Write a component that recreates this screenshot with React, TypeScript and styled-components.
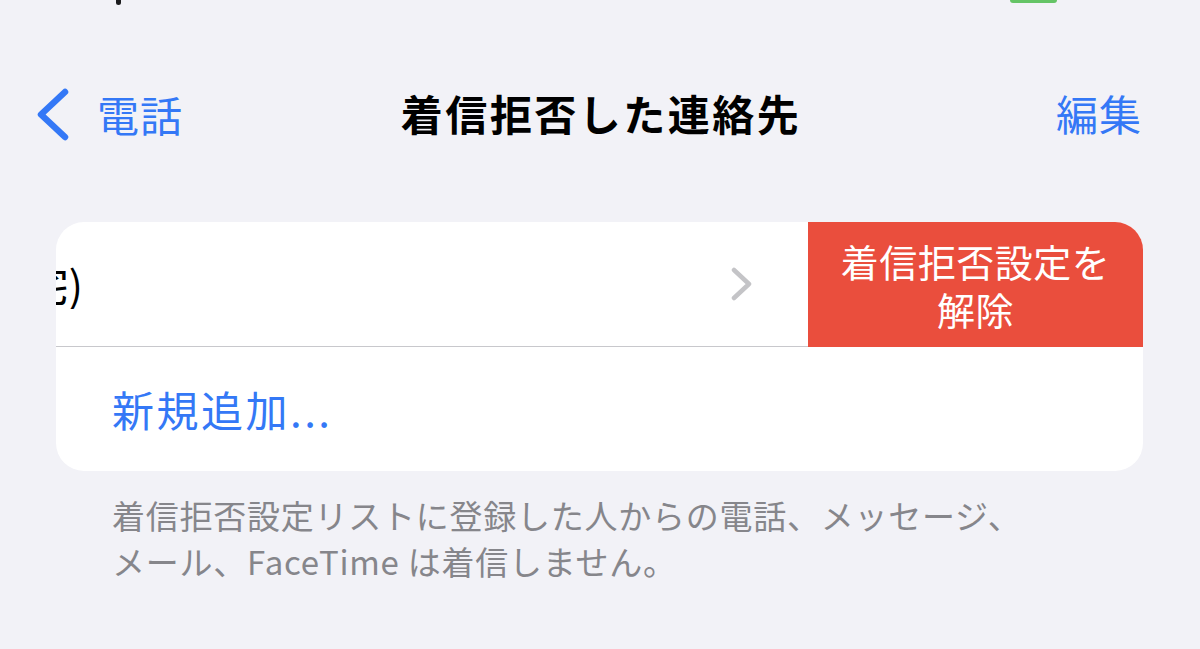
import React from "react";
import styled, { createGlobalStyle } from "styled-components";

const GlobalStyle = createGlobalStyle`
  html, body {
    margin: 0;
    padding: 0;
    background: #f2f2f7;
  }
  body {
    font-family: "Noto Sans CJK JP", "Noto Sans", sans-serif;
    -webkit-font-smoothing: antialiased;
  }
`;

const Page = styled.div`
  width: 1200px;
  height: 649px;
  overflow: hidden;
  background: #f2f2f7;
  display: flex;
  flex-direction: column;
`;

const StatusStrip = styled.div`
  height: 6px;
  display: flex;
  align-items: flex-start;
  padding: 0 143px 0 116px;
  justify-content: space-between;
`;

const StatusDot = styled.div`
  width: 5px;
  height: 5px;
  border-radius: 0 0 3px 3px;
  background: #1c1c1e;
`;

const BatteryEdge = styled.div`
  width: 47px;
  height: 3px;
  border-radius: 0 0 3px 3px;
  background: #65c466;
`;

const NavBar = styled.div`
  margin-top: 77px;
  height: 60px;
  display: grid;
  grid-template-columns: 1fr auto 1fr;
  align-items: center;
  padding: 0 37px;
`;

const BackButton = styled.div`
  display: flex;
  align-items: center;
  gap: 28px;
  color: #3478f6;
  font-size: 42px;
  line-height: 1.2;
  margin-top: 2px;
  letter-spacing: 1px;
`;

const Title = styled.div`
  font-size: 42px;
  font-weight: 700;
  line-height: 1.2;
  color: #000;
  letter-spacing: 2.5px;
  margin-left: 2px;
`;

const EditButton = styled.div`
  justify-self: end;
  color: #3478f6;
  font-size: 42px;
  line-height: 1.2;
  letter-spacing: 1px;
  margin-right: 21px;
`;

const Card = styled.div`
  margin: 79px 57px 0 56px;
  background: #fff;
  border-radius: 28px;
  overflow: hidden;
`;

const SwipedRow = styled.div`
  display: flex;
  height: 125px;
`;

const RowContent = styled.div`
  flex: 1;
  display: flex;
  align-items: center;
  border-bottom: 1.5px solid #c8c8cc;
  padding-right: 56px;
  overflow: hidden;
`;

const ClippedLabel = styled.div`
  width: 27px;
  display: flex;
  justify-content: flex-end;
  overflow: hidden;
  white-space: nowrap;
  font-size: 42px;
  line-height: 1.2;
  color: #000;
`;

const Spacer = styled.div`
  flex: 1;
`;

const DeleteAction = styled.div`
  width: 335px;
  background: #ea4e3d;
  color: #fff;
  display: flex;
  align-items: center;
  justify-content: center;
  text-align: center;
  font-size: 38px;
  line-height: 48px;
  letter-spacing: 0.5px;
  padding-top: 1px;
  box-sizing: border-box;
`;

const ActionRow = styled.div`
  height: 124px;
  display: flex;
  align-items: center;
  padding-left: 56px;
  color: #3478f6;
  font-size: 42px;
  line-height: 1.2;
  letter-spacing: 2.5px;
`;

const Footer = styled.div`
  margin: 21px 56px 0 112px;
  color: #86868b;
  font-size: 33px;
  line-height: 46px;
  letter-spacing: 0.75px;
  white-space: nowrap;
`;

const BackChevron = () => (
  <svg width="32" height="53" viewBox="0 0 32 53" fill="none">
    <polyline
      points="28,4 4,26.5 28,49"
      stroke="#3478f6"
      strokeWidth="6.5"
      strokeLinecap="round"
      strokeLinejoin="round"
    />
  </svg>
);

const RowChevron = () => (
  <svg width="21" height="34" viewBox="0 0 21 34" fill="none">
    <polyline
      points="3,3 18,17 3,31"
      stroke="#c4c4c7"
      strokeWidth="4.5"
      strokeLinecap="round"
      strokeLinejoin="round"
    />
  </svg>
);

export default function App() {
  return (
    <Page>
      <GlobalStyle />
      <StatusStrip>
        <StatusDot />
        <BatteryEdge />
      </StatusStrip>
      <NavBar>
        <BackButton>
          <BackChevron />
          <span>電話</span>
        </BackButton>
        <Title>着信拒否した連絡先</Title>
        <EditButton>編集</EditButton>
      </NavBar>
      <Card>
        <SwipedRow>
          <RowContent>
            <ClippedLabel>(自宅)</ClippedLabel>
            <Spacer />
            <RowChevron />
          </RowContent>
          <DeleteAction>
            着信拒否設定を
            <br />
            解除
          </DeleteAction>
        </SwipedRow>
        <ActionRow>新規追加...</ActionRow>
      </Card>
      <Footer>
        着信拒否設定リストに登録した人からの電話、メッセージ、
        <br />
        メール、FaceTime は着信しません。
      </Footer>
    </Page>
  );
}
